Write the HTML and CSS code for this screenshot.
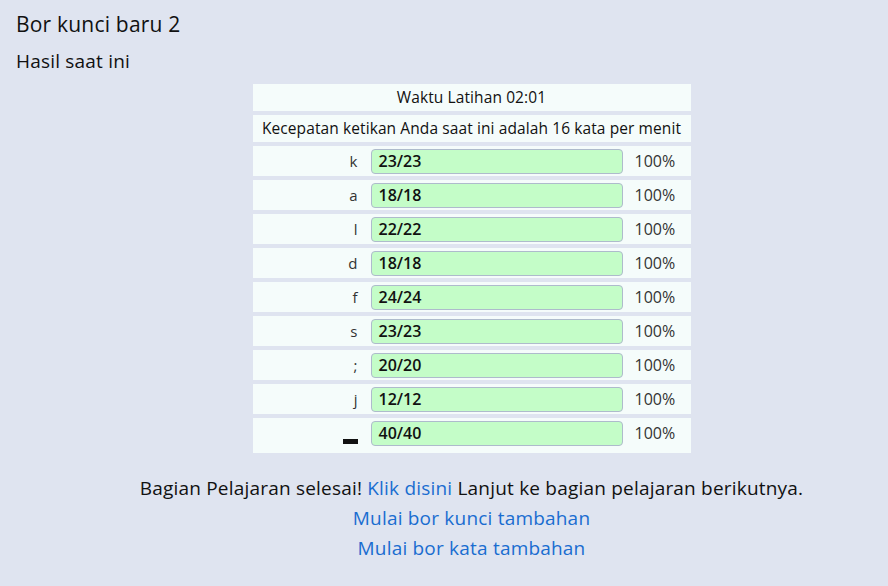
FILE: index.html
```html
<!DOCTYPE html>
<html lang="id">
<head>
<meta charset="utf-8">
<title>Bor kunci baru 2</title>
<link rel="stylesheet" href="styles.css">
</head>
<body>
<h1 class="title">Bor kunci baru 2</h1>
<h2 class="subtitle">Hasil saat ini</h2>
<main class="results">
  <table class="stats">
    <tr class="info"><td colspan="3">Waktu Latihan 02:01</td></tr>
    <tr class="info"><td colspan="3">Kecepatan ketikan Anda saat ini adalah 16 kata per menit</td></tr>
    <tr class="row"><td class="key">k</td><td class="barcell"><div class="bar">23/23</div></td><td class="pct">100%</td></tr>
    <tr class="row"><td class="key">a</td><td class="barcell"><div class="bar">18/18</div></td><td class="pct">100%</td></tr>
    <tr class="row"><td class="key">l</td><td class="barcell"><div class="bar">22/22</div></td><td class="pct">100%</td></tr>
    <tr class="row"><td class="key">d</td><td class="barcell"><div class="bar">18/18</div></td><td class="pct">100%</td></tr>
    <tr class="row"><td class="key">f</td><td class="barcell"><div class="bar">24/24</div></td><td class="pct">100%</td></tr>
    <tr class="row"><td class="key">s</td><td class="barcell"><div class="bar">23/23</div></td><td class="pct">100%</td></tr>
    <tr class="row"><td class="key">;</td><td class="barcell"><div class="bar">20/20</div></td><td class="pct">100%</td></tr>
    <tr class="row"><td class="key">j</td><td class="barcell"><div class="bar">12/12</div></td><td class="pct">100%</td></tr>
    <tr class="row row-space"><td class="key"><span class="space-key" aria-label="spasi"></span></td><td class="barcell"><div class="bar">40/40</div></td><td class="pct">100%</td></tr>
  </table>
  <p class="done">Bagian Pelajaran selesai! <a href="#">Klik disini</a> Lanjut ke bagian pelajaran berikutnya.</p>
  <p class="more"><a href="#">Mulai bor kunci tambahan</a></p>
  <p class="more"><a href="#">Mulai bor kata tambahan</a></p>
</main>
</body>
</html>
```
FILE: styles.css
```css
html, body {
  margin: 0;
  padding: 0;
  background: #dfe4f0;
}
body {
  font-family: "Open Sans", "Noto Sans", sans-serif;
  color: #111;
  height: 586px;
  overflow: hidden;
}
.title {
  margin: 0;
  padding: 10px 0 0 16px;
  font-size: 21px;
  font-weight: 400;
  line-height: 28px;
  letter-spacing: 0.2px;
}
.subtitle {
  margin: 0;
  padding: 11px 0 0 16px;
  font-size: 19px;
  font-weight: 400;
  line-height: 24px;
  letter-spacing: 0.2px;
}
.results {
  display: flex;
  flex-direction: column;
  align-items: center;
  padding-left: 55px;
  padding-top: 7px;
}
.stats {
  width: 438px;
  border-collapse: separate;
  border-spacing: 0 4px;
}
.stats td {
  background: #f5fcfb;
  padding: 0;
  vertical-align: top;
}
.info td {
  height: 27px;
  text-align: center;
  font-size: 15.5px;
  line-height: 27px;
  letter-spacing: 0.1px;
  color: #111;
}
.row td {
  height: 30px;
  line-height: 30px;
}
.row-space td {
  height: 35px;
}
.key {
  width: 105px;
  text-align: right;
  padding-right: 13px !important;
  font-size: 15px;
  color: #333;
}
.space-key {
  display: block;
  margin: 21px 0 0 auto;
  width: 15px;
  height: 5px;
  background: #111;
}
.barcell {
  width: 252px;
}
.bar {
  box-sizing: border-box;
  height: 25px;
  margin-top: 3px;
  border: 1px solid #aebbcc;
  border-radius: 4px;
  background: #c4fdc8;
  padding-left: 7px;
  font-size: 16px;
  font-weight: 600;
  line-height: 23px;
  color: #111;
}
.pct {
  padding-left: 12px !important;
  font-size: 16px;
  color: #333;
}
.done {
  margin: 16px 0 0;
  font-size: 19px;
  line-height: 30px;
  letter-spacing: 0.2px;
}
.more {
  margin: 0;
  font-size: 19px;
  line-height: 30px;
  letter-spacing: 0.2px;
}
a {
  color: #1a6dd0;
  text-decoration: none;
}
```
